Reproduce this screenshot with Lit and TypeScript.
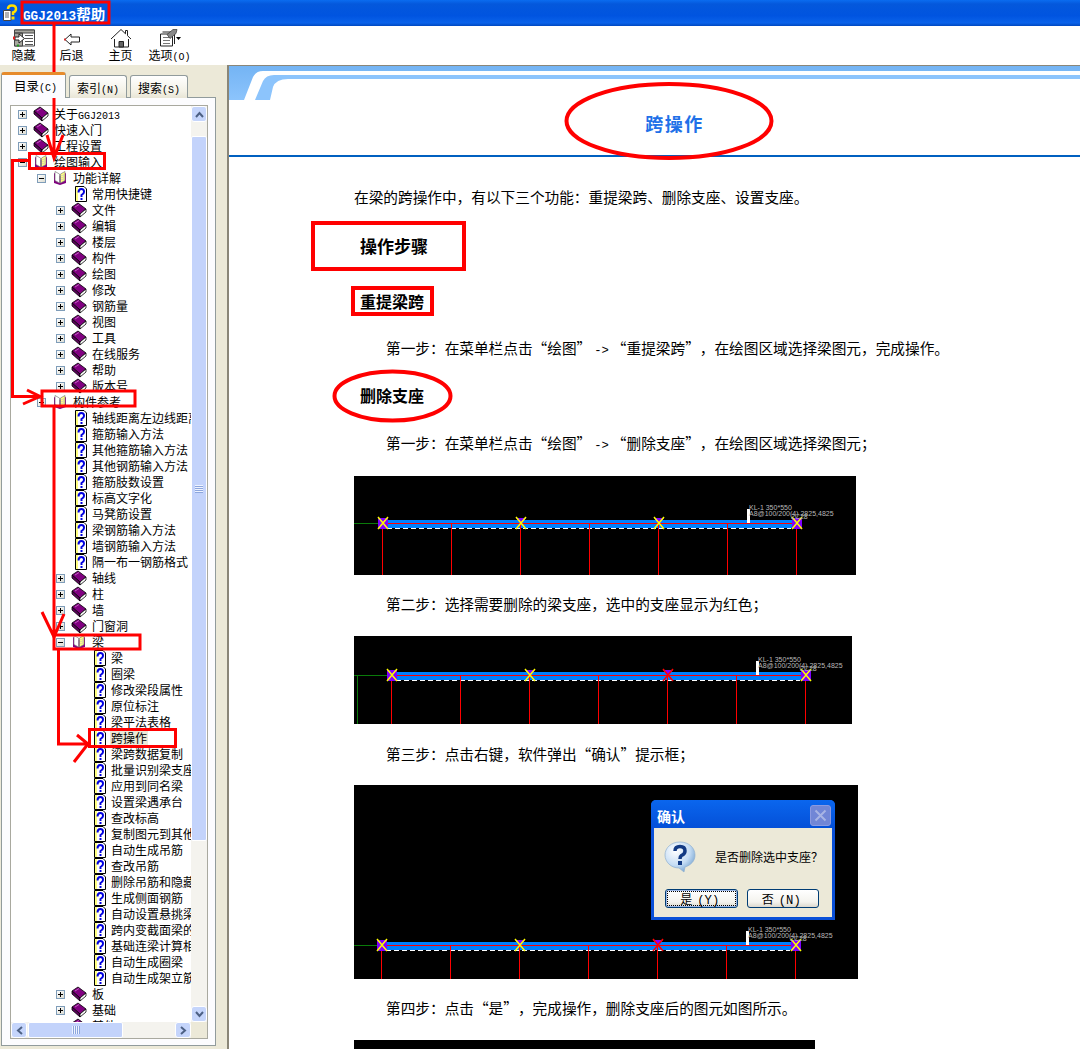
import { LitElement, html, css, svg } from 'lit';
import { customElement } from 'lit/decorators.js';

// level, icon, label, expander
type TreeRow = [number, 'book' | 'open' | 'doc', string, ('+' | '-')?];

const row = (l: number, names: string[], icon: 'book' | 'doc'): TreeRow[] =>
  names.map(n => [l, icon, n, icon === 'book' ? '+' : undefined] as TreeRow);

const TREE: TreeRow[] = [
  ...row(0, ['关于GGJ2013', '快速入门', '工程设置'], 'book'),
  [0, 'open', '绘图输入', '-'],
  [1, 'open', '功能详解', '-'],
  [2, 'doc', '常用快捷键'],
  ...row(2, ['文件', '编辑', '楼层', '构件', '绘图', '修改', '钢筋量', '视图', '工具', '在线服务', '帮助', '版本号'], 'book'),
  [1, 'open', '构件参考', '-'],
  ...row(2, ['轴线距离左边线距离', '箍筋输入方法', '其他箍筋输入方法', '其他钢筋输入方法', '箍筋肢数设置', '标高文字化', '马凳筋设置', '梁钢筋输入方法', '墙钢筋输入方法', '隔一布一钢筋格式'], 'doc'),
  ...row(2, ['轴线', '柱', '墙', '门窗洞'], 'book'),
  [2, 'open', '梁', '-'],
  ...row(3, ['梁', '圈梁', '修改梁段属性', '原位标注', '梁平法表格', '跨操作', '梁跨数据复制', '批量识别梁支座', '应用到同名梁', '设置梁遇承台', '查改标高', '复制图元到其他', '自动生成吊筋', '查改吊筋', '删除吊筋和隐藏', '生成侧面钢筋', '自动设置悬挑梁', '跨内变截面梁的', '基础连梁计算相', '自动生成圈梁', '自动生成架立筋'], 'doc'),
  ...row(2, ['板', '基础', '其他'], 'book'),
];

// half-width latin runs, the original font has 6px latin next to 12px hanzi
const lat = (s: string) =>
  s.split(/([A-Za-z0-9()\->]+)/).map((p, i) => (i % 2 ? html`<span class="lat">${p}</span>` : p));

const bookIcon = svg`<svg class="ico" viewBox="0 0 16 16" width="16" height="16">
  <path d="M1 5 7 1 15 7 9 12Z" fill="#800080" stroke="#000" stroke-width=".8"/>
  <path d="M1 5V8L9 15V12Z" fill="#5c005c" stroke="#000" stroke-width=".8"/>
  <path d="M9 12 15 7V10L9 15Z" fill="#fff" stroke="#000" stroke-width=".8"/>
  <path d="M4 5 8 2.5" stroke="#c060c0" fill="none"/></svg>`;

const openIcon = svg`<svg class="ico" viewBox="0 0 16 16" width="16" height="16">
  <path d="M2 3 8 6 14 3V13L8 15 2 13Z" fill="#800080"/>
  <path d="M3 1.500 7.500 4V13L3 10.500Z" fill="#fff" stroke="#808080" stroke-width=".7"/>
  <path d="M13 1.500 8.500 4V13L13 10.500Z" fill="#ffff80" stroke="#808080" stroke-width=".7"/>
  <path d="M10 5V11M11.500 4.500V10" stroke="#c0c0c0" stroke-dasharray="1 1" fill="none"/></svg>`;

const docIcon = svg`<svg class="ico" viewBox="0 0 16 16" width="16" height="16">
  <path d="M4.500 .5H13L15.500 3V15.500H4.500Z" fill="#fff" stroke="#000"/>
  <path d="M5 1H7V15H5Z" fill="#ffff80"/>
  <path d="M7.500 6.500Q7.500 3 10.300 3T13 6Q13 7.500 10.500 9V11" fill="none" stroke="#0000e0" stroke-width="2"/>
  <path d="M9.500 12h2v2h-2z" fill="#0000e0"/></svg>`;

const icons = { book: bookIcon, open: openIcon, doc: docIcon };

const chevron = (d: string) =>
  svg`<svg width="9" height="7" viewBox="0 0 9 7"><path d="${d}" fill="none" stroke="#4d6185" stroke-width="2"/></svg>`;
const chevronSide = (d: string) =>
  svg`<svg width="7" height="9" viewBox="0 0 7 9"><path d="${d}" fill="none" stroke="#4d6185" stroke-width="2"/></svg>`;

// cad drawing used by the three pictures, x0 = first support, y = beam axis
function cad(w: number, h: number, x0: number, y: number, redAt: number, greenDrop: boolean) {
  const step = 69;
  const xs = [0, 1, 2, 3, 4, 5, 6].map(i => x0 + i * step);
  const last = xs[6];
  return svg`<svg class="cad" width="${w}" height="${h}" viewBox="0 0 ${w} ${h}">
    <g shape-rendering="crispEdges">
      <path d="M0 ${y + .5}H${x0}" stroke="#0a7a0a"/>
      ${greenDrop ? svg`<path d="M3.500 ${y}V${h}" stroke="#0a7a0a"/>` : ''}
      <rect x="${x0}" y="${y - 3}" width="${last - x0}" height="8" fill="#0080ff"/>
      <path d="M${x0} ${y + .5}H${last}" stroke="#ff0000" stroke-width="1"/>
      <path d="M${x0 + 5} ${y + 5.5}H${last - 5}" stroke="#fff" stroke-dasharray="5 3"/>
      ${xs.map(x => svg`<path d="M${x + .5} ${y}V${h}" stroke="#ff0000"/>`)}
      <rect x="${last - 49}" y="${y - 14}" width="3" height="14" fill="#fff"/>
    </g>
    ${[0, 2, 4, 6].map(i => {
      const x = xs[i];
      const c = i === redAt ? '#ff0000' : '#ffff00';
      return svg`<path d="${i === 0 || i === 6 ? `M${x - 4} ${y - 5}h10v11h-10z` : `M${x - 4} ${y - 5}h10l-5 6z`}" fill="#8000ff"/>
        <path d="M${x - 4} ${y - 6}L${x + 6} ${y + 6}M${x + 6} ${y - 6}L${x - 4} ${y + 6}" stroke="${c}" stroke-width="1.500" fill="none"/>`;
    })}
    <text x="${last - 47}" y="${y - 13}" class="cad-t">KL-1 350*550</text>
    <text x="${last - 47}" y="${y - 7}" class="cad-t">A8@100/200(4) 2825,4825</text>
    <text x="${last - 5}" y="${y - 4}" class="cad-t">2C28</text>
  </svg>`;
}

@customElement('app-root')
export class AppRoot extends LitElement {
  static styles = css`
    :host {
      display: block;
      position: relative;
      width: 1080px;
      height: 1049px;
      overflow: hidden;
      background: #ece9d8;
      font-family: "Noto Sans CJK SC", "Liberation Sans", sans-serif;
      font-size: 12px;
      color: #000;
      text-spacing-trim: space-all;
    }
    .lat { font-family: "Liberation Mono", monospace; font-size: 10px; }
    .titlebar {
      height: 26px;
      box-sizing: border-box;
      display: flex;
      align-items: center;
      gap: 5px;
      padding-left: 2px;
      background: linear-gradient(#0a6cf0 0, #0458dc 4px, #0054e0 60%, #0a62ea 88%, #0048c0 100%);
      color: #fff;
      font-weight: 700;
      font-size: 14.500px;
    }
    .titlebar .tl { font-family: "Liberation Mono", monospace; font-size: 12.670px; }
    .toolbar {
      height: 39px;
      background: #fff;
      position: relative;
      display: flex;
    }
    .tool {
      width: 49px;
      display: flex;
      flex-direction: column;
      align-items: center;
      line-height: 15px;
    }
    .tool svg { height: 21px; display: block; overflow: visible; }
    .tool:first-child { width: 47px; }
    .main { display: flex; height: 984px; }
    .left {
      width: 227px;
      box-sizing: border-box;
      padding: 8px 11px 3px 1px;
      display: flex;
      flex-direction: column;
    }
    .tabs { display: flex; align-items: flex-end; height: 25px; position: relative; z-index: 1; margin-bottom: -1px; }
    .tab {
      height: 23px;
      box-sizing: border-box;
      width: 58px;
      margin-left: 1px;
      border: 1px solid #919b9c;
      border-bottom: none;
      border-radius: 3px 3px 0 0;
      background: linear-gradient(#fff, #f3f1e6 70%, #e8e5d6);
      text-align: center;
      line-height: 23px;
    }
    .tab + .tab { margin-left: 3px; }
    .tab.on {
      width: 65px;
      height: 26px;
      margin-left: 0;
      background: #fcfcfe;
      border-top: 3px solid #e68b2c;
      line-height: 22px;
      text-align: left;
      padding-left: 12px;
      font-size: 12.500px;
    }
    .panel {
      flex: 1;
      min-height: 0;
      border: 1px solid #919b9c;
      background: #fcfcfe;
      padding: 7px 7px 6px 8px;
      display: flex;
    }
    .listbox {
      flex: 1;
      min-width: 0;
      border: 1px solid #a9a99f;
      background: #fff;
      display: grid;
      grid-template-columns: 180px 16px;
      grid-template-rows: 916px 16px;
    }
    .tree { overflow: hidden; }
    .row { height: 16px; display: flex; align-items: center; white-space: nowrap; line-height: 16px; }
    .exp {
      width: 9px;
      height: 9px;
      flex: none;
      margin-right: 6px;
      box-sizing: border-box;
      position: relative;
    }
    .exp.box { border: 1px solid #7f9db9; background: linear-gradient(135deg, #fff, #dcdcd2); }
    .exp.box::before { content: ""; position: absolute; left: 1px; right: 1px; top: 3px; height: 1px; background: #000; }
    .exp.plus::after { content: ""; position: absolute; top: 1px; bottom: 1px; left: 3px; width: 1px; background: #000; }
    .ico { flex: none; display: block; margin-right: 4px; }
    .row span.name { padding: 0 1px; height: 16px; }
    .row span.name.sel { background: #ece9d8; }
    .vbar { background: #f4f3ee; display: flex; flex-direction: column; }
    .hbar { background: #f4f3ee; display: flex; grid-column: 1; }
    .corner { background: #ece9d8; }
    .sbtn {
      width: 16px;
      height: 16px;
      flex: none;
      box-sizing: border-box;
      border: 1px solid #fff;
      border-radius: 3px;
      background: #c5d5fb;
      display: flex;
      align-items: center;
      justify-content: center;
    }
    .vtrack, .htrack { flex: 1; position: relative; display: flex; }
    .vtrack { flex-direction: column; padding-top: 14px; }
    .thumb {
      box-sizing: border-box;
      border: 1px solid #fff;
      border-radius: 2px;
      background: #c3d3fb;
      display: flex;
      align-items: center;
      justify-content: center;
    }
    .vtrack .thumb { height: 705px; width: 16px; }
    .htrack .thumb { width: 95px; height: 16px; margin-left: 1px; }
    .grip-v { width: 8px; height: 8px; background: repeating-linear-gradient(#eef3ff 0 1px, #8ca6dd 1px 2px); }
    .grip-h { width: 8px; height: 8px; background: repeating-linear-gradient(90deg, #eef3ff 0 1px, #8ca6dd 1px 2px); }
    .right {
      flex: 1;
      min-width: 0;
      background: #fff;
      border-left: 2px solid #8a8678;
      border-top: 1px solid #8a8678;
      overflow: hidden;
    }
    .head { border-bottom: 2px solid #0060c0; height: 89px; }
    .head svg { display: block; }
    .head h1 {
      margin: 0;
      height: 46px;
      line-height: 46px;
      padding-left: 40px;
      text-align: center;
      font-size: 18px;
      letter-spacing: 1.500px;
      font-weight: 700;
      color: #2070e8;
    }
    .body { padding-left: 125px; font-size: 14.670px; line-height: 20px; }
    .body p { margin: 0; height: 20px; white-space: nowrap; }
    .body .step { margin-left: 32px; margin-top: 20px; }
    .body .lat { font-size: 12.200px; padding: 0 3px; }
    .body .lead { margin-top: 30px; }
    .body h2 { margin: 29px 0 0 6px; font-size: 17px; line-height: 20px; font-weight: 700; }
    .body h3 { margin: 27px 0 0 6px; font-size: 16px; line-height: 20px; font-weight: 700; }
    .body h3.first { margin-top: 35px; }
    .body .s27 { margin-top: 27px; }
    .body .s28 { margin-top: 28px; }
    .body .s19 { margin-top: 19px; }
    .fig { margin-top: 22px; position: relative; }
    .fig.s21 { margin-top: 21px; }
    .fig.s23 { margin-top: 23px; }
    .cad { display: block; background: #000; }
    .cad-t { font-family: "Liberation Sans", sans-serif; font-size: 7px; fill: #b8b8b8; }
    .last { width: 461px; height: 40px; background: #000; }
    .dlg {
      position: absolute;
      left: 297px;
      top: 15px;
      width: 184px;
      height: 120px;
      box-sizing: border-box;
      background: #0a50d8;
      border-radius: 5px 5px 0 0;
      padding: 0 3px 3px;
      display: flex;
      flex-direction: column;
      font-size: 12px;
      line-height: 16px;
    }
    .dlg-t {
      height: 25px;
      display: flex;
      align-items: center;
      justify-content: space-between;
      padding: 3px 4px 0 6px;
      color: #fff;
      font-weight: 700;
      font-size: 14px;
      background: linear-gradient(#0a66ee, #0450d8);
      margin: 0 -3px;
      border-radius: 5px 5px 0 0;
    }
    .dlg-x {
      width: 21px;
      height: 21px;
      box-sizing: border-box;
      border: 1px solid #8c9ae0;
      border-radius: 3px;
      background: #7186d6;
      display: flex;
      align-items: center;
      justify-content: center;
    }
    .dlg-b { flex: 1; background: #ece9d8; padding: 13px 13px 0 11px; }
    .dlg-m { display: flex; align-items: center; gap: 19px; height: 32px; white-space: nowrap; margin-left: -1px; }
    .dlg-m svg { flex: none; }
    .dlg-btns { display: flex; gap: 9px; margin-top: 16px; }
    .btn {
      width: 73px;
      height: 19px;
      box-sizing: border-box;
      border: 1px solid #003c74;
      border-radius: 3px;
      background: linear-gradient(#fff, #f4f3ee 70%, #dcd8ce);
      text-align: center;
      line-height: 17px;
    }
    .btn .lat { margin-left: 2px; }
    .btn.def { box-shadow: inset 0 0 0 1px #9db8e8; outline: 1px dotted #000; outline-offset: -3px; }
    .marks { position: absolute; left: 0; top: 0; pointer-events: none; }
  `;

  renderTree() {
    return TREE.map(([level, icon, label, exp]) => html`
      <div class="row" style="padding-left:${7 + level * 19}px">
        <span class="exp ${exp ? 'box' : ''} ${exp === '+' ? 'plus' : ''}"></span>
        ${icons[icon]}
        <span class="name ${label === '跨操作' ? 'sel' : ''}">${lat(label)}</span>
      </div>`);
  }

  render() {
    return html`
      <div class="titlebar">
        <svg width="16" height="18" viewBox="0 0 16 18">
          <path d="M1.500 6.500H9V16.500H1.500Z" fill="#fff" stroke="#444"/>
          <path d="M3 9H7M3 11H7M3 13H7" stroke="#666"/>
          <path d="M6 5Q6 1.500 10 1.500T14 5Q14 7.500 11 8.500V11" fill="none" stroke="#ffe000" stroke-width="2.500"/>
          <path d="M9.500 12.500h3v3h-3z" fill="#ffe000"/>
        </svg>
        <span><span class="tl">GGJ2013</span>帮助</span>
      </div>
      <div class="toolbar">
        <div class="tool">
          <svg width="22" height="21" viewBox="0 -1.500 22 21">
            <path d="M1.500 2.500H21.500V18.500H1.500Z" fill="#fff" stroke="#444"/>
            <path d="M1.500 2.500H21.500V5.500H1.500ZM1.500 5.500H9.500V18.500H1.500Z" fill="#a8a8a0" stroke="#444"/>
            <path d="M12 8h8M12 11h8M12 14h8M12 17h8" stroke="#555"/>
            <path d="M2 9.500H6V6.500L11.500 11 6 15.500V12.500H2Z" fill="#fff" stroke="#222"/>
            <path d="M0 9h2v3H0z" fill="#e02020"/><path d="M4 17h2v2H4z" fill="#20a020"/>
          </svg>
          <span>隐藏</span>
        </div>
        <div class="tool">
          <svg width="18" height="21" viewBox="0 -1.500 18 21">
            <path d="M2 12 8 6.500V9.500H16.500V14.500H8V17.500Z" fill="#fff" stroke="#222"/>
            <path d="M1 11h2v2H1z" fill="#d03030"/>
          </svg>
          <span>后退</span>
        </div>
        <div class="tool">
          <svg width="22" height="21" viewBox="0 -1.500 22 21">
            <path d="M4.500 10V19.500H18.500V10" fill="#fff" stroke="#222"/>
            <path d="M1 11.500 11 2 15.500 6.300V3H17.500V8.200L21 11.500" fill="#fff" stroke="#222"/>
            <path d="M9 14H13.500V19.500H9Z" fill="#666" stroke="#222"/>
          </svg>
          <span>主页</span>
        </div>
        <div class="tool">
          <svg width="22" height="21" viewBox="0 -1.500 22 21">
            <path d="M1.500 6.500H13.500V18.500H1.500Z" fill="#fff" stroke="#222"/>
            <path d="M3.500 4.500H15.500V16.500" fill="none" stroke="#222"/>
            <path d="M4 10h7M4 13h7M4 16h7" stroke="#777"/>
            <path d="M8 7 14 2h4l-1 4-6 5z" fill="#888" stroke="#333" stroke-width=".7"/>
            <path d="M17 9.500h5l-2.500 3z" fill="#000"/>
          </svg>
          <span>选项<span class="lat">(O)</span></span>
        </div>
      </div>
      <div class="main">
        <div class="left">
          <div class="tabs">
            <div class="tab on">目录<span class="lat">(C)</span></div>
            <div class="tab">索引<span class="lat">(N)</span></div>
            <div class="tab">搜索<span class="lat">(S)</span></div>
          </div>
          <div class="panel">
            <div class="listbox">
              <div class="tree">${this.renderTree()}</div>
              <div class="vbar">
                <div class="sbtn">${chevron('M1 6 4.500 2 8 6')}</div>
                <div class="vtrack"><div class="thumb"><div class="grip-v"></div></div></div>
                <div class="sbtn">${chevron('M1 1 4.500 5 8 1')}</div>
              </div>
              <div class="hbar">
                <div class="sbtn">${chevronSide('M6 1 2 4.500 6 8')}</div>
                <div class="htrack"><div class="thumb"><div class="grip-h"></div></div></div>
                <div class="sbtn">${chevronSide('M1 1 5 4.500 1 8')}</div>
              </div>
              <div class="corner"></div>
            </div>
          </div>
        </div>
        <div class="right">
          <div class="head">
            <svg width="851" height="34" viewBox="0 0 851 34">
              <defs>
                <linearGradient id="hd" x1="0" y1="0" x2="0" y2="1">
                  <stop offset="0" stop-color="#74b4f4"/><stop offset="1" stop-color="#8cc4fc"/>
                </linearGradient>
              </defs>
              <path d="M0 0H851V5H34Q27 5 24 11L15 34H0Z" fill="url(#hd)"/>
              <path d="M26 34 34 15Q37 9 45 9H851V13H59Q47 13 44 21L41 34Z" fill="#8cc4fc"/>
            </svg>
            <h1>跨操作</h1>
          </div>
          <div class="body">
            <p class="lead">在梁的跨操作中，有以下三个功能：重提梁跨、删除支座、设置支座。</p>
            <h2>操作步骤</h2>
            <h3 class="first">重提梁跨</h3>
            <p class="step s27">第一步：在菜单栏点击“绘图”${lat('->')}“重提梁跨”，在绘图区域选择梁图元，完成操作。</p>
            <h3>删除支座</h3>
            <p class="step s28">第一步：在菜单栏点击“绘图”${lat('->')}“删除支座”，在绘图区域选择梁图元；</p>
            <div class="fig s23">${cad(502, 99, 28, 47, -1, false)}</div>
            <p class="step s19">第二步：选择需要删除的梁支座，选中的支座显示为红色；</p>
            <div class="fig">${cad(498, 88, 37, 39, 4, true)}</div>
            <p class="step">第三步：点击右键，软件弹出“确认”提示框；</p>
            <div class="fig s21">
              ${cad(504, 194, 27, 160, 4, false)}
              <div class="dlg">
                <div class="dlg-t">
                  <span>确认</span>
                  <span class="dlg-x">
                    <svg width="13" height="13" viewBox="0 0 13 13"><path d="M1.500 1.500 11.500 11.500M11.500 1.500 1.500 11.500" stroke="#a8b4e4" stroke-width="2"/></svg>
                  </span>
                </div>
                <div class="dlg-b">
                  <div class="dlg-m">
                    <svg width="32" height="32" viewBox="0 0 32 32">
                      <defs>
                        <radialGradient id="qb" cx=".35" cy=".3" r=".8">
                          <stop offset="0" stop-color="#fff"/><stop offset=".6" stop-color="#c4dcf4"/><stop offset="1" stop-color="#6c9ccc"/>
                        </radialGradient>
                      </defs>
                      <path d="M16 1C7 1 1 7 1 14S7 27 15 27L20 31 21 26C27 24 31 20 31 14 31 7 25 1 16 1Z" fill="url(#qb)" stroke="#90b0d0" stroke-width=".7"/>
                      <path d="M11 10Q11 5.500 16 5.500T21 10Q21 13 17.500 14.500 16 15.500 16 18" fill="none" stroke="#123a84" stroke-width="3.500"/>
                      <path d="M14 20h4v4h-4z" fill="#123a84"/>
                    </svg>
                    <span>是否删除选中支座？</span>
                  </div>
                  <div class="dlg-btns">
                    <div class="btn def">是<span class="lat">(Y)</span></div>
                    <div class="btn">否<span class="lat">(N)</span></div>
                  </div>
                </div>
              </div>
            </div>
            <p class="step s19">第四步：点击“是”，完成操作，删除支座后的图元如图所示。</p>
            <div class="fig last"></div>
          </div>
        </div>
      </div>
      <svg class="marks" width="1080" height="1049" viewBox="0 0 1080 1049" fill="none" stroke="#f00" stroke-width="3">
        <rect x="22" y="2" width="87" height="21"/>
        <path d="M54 24V158M47 135 54 158 63 135"/>
        <rect x="29.500" y="153.500" width="75" height="15"/>
        <path d="M29 160.500H12.500V396.500H40M27 390 40 396.500 23 404"/>
        <rect x="42" y="391" width="93" height="15"/>
        <path d="M54 407V636M42 612 54 637 64 614"/>
        <rect x="54" y="635" width="86" height="14"/>
        <path d="M58.500 650V744H88M77 735 88 744 74 762"/>
        <rect x="89.500" y="729.500" width="86" height="17"/>
        <ellipse cx="669" cy="121" rx="102.500" ry="37" stroke-width="4"/>
        <rect x="313" y="223" width="151" height="46" stroke-width="4"/>
        <rect x="353" y="288" width="79" height="26" stroke-width="4"/>
        <ellipse cx="392.500" cy="396" rx="58" ry="24.500" stroke-width="4"/>
      </svg>
    `;
  }
}
